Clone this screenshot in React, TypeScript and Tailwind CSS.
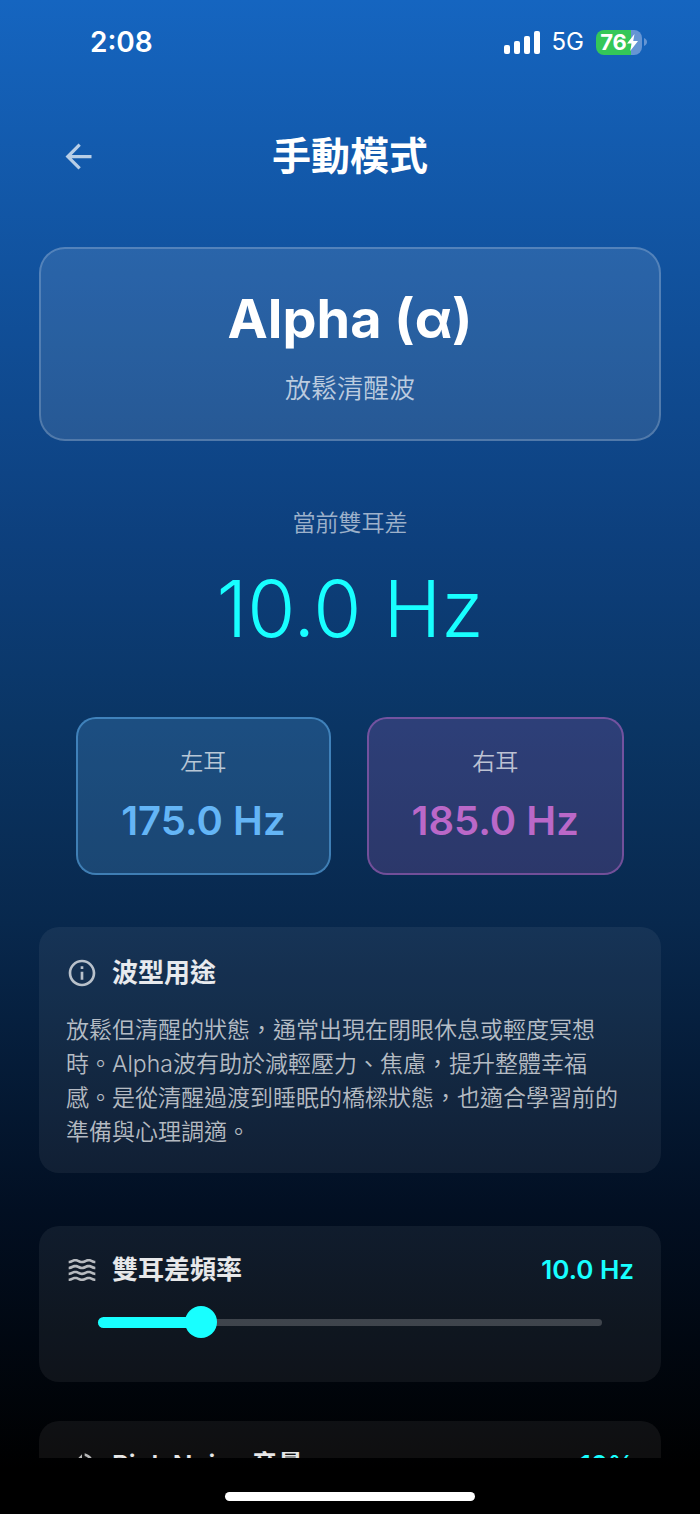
import { useState } from "react";
import type { ReactNode } from "react";
import { MdArrowBack, MdInfoOutline, MdVolumeUp, MdWaves } from "react-icons/md";

const INFO_TEXT =
  "放鬆但清醒的狀態，通常出現在閉眼休息或輕度冥想時。Alpha波有助於減輕壓力、焦慮，提升整體幸福感。是從清醒過渡到睡眠的橋樑狀態，也適合學習前的準備與心理調適。";

function StatusBar() {
  return (
    <div className="flex h-[84px] shrink-0 items-center justify-between pr-[53px] pl-[90px] text-white">
      <span className="text-[28px] leading-9 font-semibold">2:08</span>
      <div className="flex items-center gap-3">
        <svg viewBox="0 0 36 23" className="h-[23px] w-9" fill="currentColor" aria-hidden="true">
          <rect x="0" y="14" width="6" height="9" rx="2" />
          <rect x="10" y="10" width="6" height="13" rx="2" />
          <rect x="20" y="5" width="6" height="18" rx="2" />
          <rect x="30" y="0" width="6" height="23" rx="2" />
        </svg>
        <span className="text-2xl">5G</span>
        <div className="flex items-center gap-px">
          <div className="flex h-[25px] w-[46px] items-center justify-center rounded-lg bg-[linear-gradient(90deg,#34c759_76%,#6595d4_76%)]">
            <span className="text-[22px] leading-6 font-bold">76</span>
            <svg viewBox="0 0 11 17" className="h-[17px] w-[11px]" fill="currentColor" aria-hidden="true">
              <path d="M7.5 0 0 9.5h4.6L3.2 17 11 7H6.2z" />
            </svg>
          </div>
          <svg viewBox="0 0 4 8" className="h-2 w-1" fill="#6595d4" aria-hidden="true">
            <path d="M1 0c4 1.5 4 6.500 0 8z" />
          </svg>
        </div>
      </div>
    </div>
  );
}

type EarProps = { label: string; value: string; box: string; color: string };

function EarCard({ label, value, box, color }: EarProps) {
  return (
    <div className={`flex flex-col items-center rounded-[20px] border-2 px-[43px] pt-[25px] pb-[27px] ${box}`}>
      <p className="text-[23px] leading-9 font-[350] text-white/70">{label}</p>
      <p className={`mt-4 text-[40px] leading-[50px] font-semibold ${color}`}>{value}</p>
    </div>
  );
}

type SliderCardProps = {
  id: string;
  icon: ReactNode;
  label: string;
  min: number;
  max: number;
  initial: number;
  format: (value: number) => string;
};

function SliderCard({ id, icon, label, min, max, initial, format }: SliderCardProps) {
  const [value, setValue] = useState(initial);
  const percent = ((value - min) / (max - min)) * 100;

  return (
    <section className="rounded-[20px] bg-white/6 px-[27px] pt-[26px] pb-11">
      <div className="flex items-center gap-[14px]">
        <span className="text-[32px] text-white/70">{icon}</span>
        <label htmlFor={id} className="flex-1 text-[26px] leading-9 font-semibold text-white/90">
          {label}
        </label>
        <output htmlFor={id} className="text-[26px] leading-9 font-semibold text-[#18ffff]">
          {format(value)}
        </output>
      </div>
      <div className="relative mx-8 mt-[18px] flex h-8 items-center">
        <div className="h-[7px] w-full rounded-full bg-white/20" />
        <div className="absolute left-0 h-[11px] rounded-full bg-[#18ffff]" style={{ width: `${percent}%` }} />
        <input
          id={id}
          type="range"
          min={min}
          max={max}
          value={value}
          onChange={(e) => setValue(Number(e.target.value))}
          className="absolute -inset-x-4 h-8 cursor-pointer appearance-none bg-transparent [&::-webkit-slider-thumb]:size-8 [&::-webkit-slider-thumb]:appearance-none [&::-webkit-slider-thumb]:rounded-full [&::-webkit-slider-thumb]:bg-[#18ffff]"
        />
      </div>
    </section>
  );
}

export default function App() {
  return (
    <div className="flex h-screen flex-col bg-[linear-gradient(180deg,#1565c0_0%,#0d3f7c_36%,#0a3564_48%,#08284d_61%,#020f22_80%,#000000_97%)] font-[Inter,'Noto_Sans_CJK_TC',sans-serif]">
      <StatusBar />
      <main className="flex-1 overflow-y-auto px-[39px] [scrollbar-width:none]">
        <header className="mt-9 grid grid-cols-[80px_1fr_80px] items-center px-5">
          <button type="button" aria-label="返回" className="w-10 text-[39px] text-white/70">
            <MdArrowBack />
          </button>
          <h1 className="text-center text-[39px] leading-[72px] font-semibold text-white">手動模式</h1>
        </header>

        <section className="mt-[55px] flex flex-col items-center rounded-[26px] border-2 border-white/20 bg-white/10 pt-9 pb-[30px]">
          <h2 className="text-[54px] leading-[68px] font-bold text-white">Alpha (α)</h2>
          <p className="mt-4 text-[26px] leading-10 font-[350] text-white/70">放鬆清醒波</p>
        </section>

        <section className="mt-16 flex flex-col items-center">
          <p className="text-[23px] leading-9 font-[350] text-white/60">當前雙耳差</p>
          <p className="mt-5 text-[78px] leading-[96px] font-light text-[#18ffff]">10.0 Hz</p>
        </section>

        <section className="mt-[60px] flex justify-center gap-9">
          <EarCard
            label="左耳"
            value="175.0 Hz"
            box="border-[#64b5f6]/50 bg-[#64b5f6]/20"
            color="text-[#64b5f6]"
          />
          <EarCard
            label="右耳"
            value="185.0 Hz"
            box="border-[#ba68c8]/50 bg-[#ba68c8]/20"
            color="text-[#ba68c8]"
          />
        </section>

        <section className="mt-[52px] rounded-[20px] bg-white/6 px-[27px] pt-7 pb-6">
          <div className="flex items-center gap-[14px]">
            <MdInfoOutline className="text-[32px] text-white/70" />
            <h3 className="text-[26px] leading-9 font-semibold text-white/90">波型用途</h3>
          </div>
          <p className="mt-[22px] pr-2 text-[23px] leading-[34px] font-[350] text-white/70">{INFO_TEXT}</p>
        </section>

        <div className="mt-[53px] flex flex-col gap-[39px]">
          <SliderCard
            id="beat-frequency"
            icon={<MdWaves />}
            label="雙耳差頻率"
            min={1}
            max={45}
            initial={10}
            format={(v) => `${v.toFixed(1)} Hz`}
          />
          <SliderCard
            id="noise-volume"
            icon={<MdVolumeUp />}
            label="Pink Noise 音量"
            min={0}
            max={100}
            initial={10}
            format={(v) => `${v}%`}
          />
        </div>
      </main>
      <footer className="flex h-14 shrink-0 items-center justify-center pt-5">
        <div className="h-[9px] w-[250px] rounded-full bg-white" />
      </footer>
    </div>
  );
}
